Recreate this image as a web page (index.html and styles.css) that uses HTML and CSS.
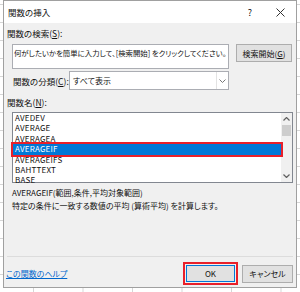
FILE: index.html
```html
<!DOCTYPE html>
<html lang="ja">
<head>
    <meta charset="UTF-8">
    <meta name="viewport" content="width=device-width, initial-scale=1.0"/>
    <title>関数の挿入</title>
    <link rel="stylesheet" href="styles.css">
</head>
<body>
<div class="dialog">
    <div class="titlebar">
        <span class="title">関数の挿入</span>
        <span class="help">?</span>
        <span class="close">
            <svg width="9" height="9" viewBox="0 0 9 9"><path d="M0.5 0.5 L8.5 8.5 M8.5 0.5 L0.5 8.5" stroke="#333" stroke-width="1" fill="none"/></svg>
        </span>
    </div>

    <div class="content">
        <div class="label first">関数の検索(<u>S</u>):</div>
        <div class="search-row">
            <div class="search-box">何がしたいかを簡単に入力して、[検索開始] をクリックしてください。</div>
            <div class="btn search-btn">検索開始(<u>G</u>)</div>
        </div>

        <div class="category-row">
            <span class="cat-label">関数の分類(<u>C</u>):</span>
            <div class="select">
                <span class="select-text">すべて表示</span>
                <span class="select-arrow">
                    <svg width="7" height="4" viewBox="0 0 7 4"><path d="M0.5 0.5 L3.5 3.5 L6.5 0.5" stroke="#777" fill="none"/></svg>
                </span>
            </div>
        </div>

        <div class="label names">関数名(<u>N</u>):</div>
        <div class="listbox">
            <ul class="items">
                <li>AVEDEV</li>
                <li>AVERAGE</li>
                <li>AVERAGEA</li>
                <li class="selected">AVERAGEIF</li>
                <li>AVERAGEIFS</li>
                <li>BAHTTEXT</li>
                <li>BASE</li>
            </ul>
            <div class="scrollbar">
                <span class="arrow">
                    <svg width="7" height="4" viewBox="0 0 7 4"><path d="M0.5 3.5 L3.5 0.5 L6.5 3.5" stroke="#606060" stroke-width="1.2" fill="none"/></svg>
                </span>
                <span class="thumb"></span>
                <span class="arrow down">
                    <svg width="7" height="4" viewBox="0 0 7 4"><path d="M0.5 0.5 L3.5 3.5 L6.5 0.5" stroke="#606060" stroke-width="1.2" fill="none"/></svg>
                </span>
            </div>
        </div>

        <div class="desc">
            <div>AVERAGEIF(範囲,条件,平均対象範囲)</div>
            <div>特定の条件に一致する数値の平均 (算術平均) を計算します。</div>
        </div>

        <div class="footer">
            <a class="help-link" href="#">この関数のヘルプ</a>
            <div class="btn ok">OK</div>
            <div class="btn cancel">キャンセル</div>
        </div>
    </div>
</div>
</body>
</html>
```

FILE: styles.css
```css
body {
    margin: 0;
    width: 300px;
    height: 292px;
    overflow: hidden;
    font-family: "Noto Sans CJK JP", "Noto Sans", sans-serif;
    font-size: 8px;
    font-feature-settings: "palt";
    color: #111;
    background-color: #fff;
    background-image:
        linear-gradient(to right, #d6d6d6 1px, transparent 1px),
        linear-gradient(#d6d6d6 1px, transparent 1px);
    background-size: 49.5px 100%, 100% 18px;
    background-position: 33px 0, 0 4px;
}

u {
    text-decoration: underline;
    text-underline-offset: 1px;
}

.dialog {
    margin-left: 3px;
    width: 294px;
    height: 288px;
    box-sizing: border-box;
    border: 1px solid #a0a0a0;
    background: #f0f0f0;
    display: flex;
    flex-direction: column;
    white-space: nowrap;
}

.titlebar {
    height: 22px;
    flex: none;
    background: #fff;
    display: flex;
    align-items: center;
    padding-left: 4px;
}

.title {
    flex: 1;
    font-size: 8.5px;
}

.help {
    font-size: 9px;
    width: 30px;
    text-align: center;
    margin-top: 1px;
}

.close {
    width: 30px;
    display: flex;
    justify-content: center;
    margin-right: 1px;
}

.content {
    flex: 1;
    display: flex;
    flex-direction: column;
    padding: 0 3px;
}

.label {
    line-height: 12px;
    font-size: 8.5px;
}

.label.first {
    margin-top: 4px;
}

.search-row {
    display: flex;
    align-items: flex-start;
    margin: 5px 0 0 5px;
}

.search-box {
    width: 217px;
    height: 25px;
    box-sizing: border-box;
    border: 1px solid #abadb3;
    background: #fff;
    padding: 2px 1px;
    font-size: 7.4px;
    line-height: 12px;
    overflow: hidden;
}

.btn {
    box-sizing: border-box;
    background: #e1e1e1;
    border: 1px solid #adadad;
    display: flex;
    align-items: center;
    justify-content: center;
}

.search-btn {
    margin-left: 7px;
    width: 56px;
    height: 18px;
}

.category-row {
    display: flex;
    align-items: center;
    margin: 2px 0 0 6px;
}

.cat-label {
    width: 56px;
    flex: none;
    font-size: 8.5px;
}

.select {
    width: 160px;
    height: 19px;
    box-sizing: border-box;
    border: 1px solid #abadb3;
    background: #fff;
    display: flex;
    align-items: stretch;
}

.select-text {
    flex: 1;
    padding-left: 3px;
    line-height: 17px;
}

.select-arrow {
    width: 11px;
    border-left: 1px solid #e3e3e3;
    display: flex;
    align-items: center;
    justify-content: center;
}

.label.names {
    margin-top: 6px;
}

.listbox {
    margin: 4px 0 0 5px;
    width: 281px;
    height: 71px;
    box-sizing: border-box;
    border: 1px solid #828790;
    background: #fff;
    display: flex;
}

.items {
    list-style: none;
    margin: 0;
    padding: 0;
    flex: 1;
    letter-spacing: 0.2px;
}

.items li {
    height: 10.4px;
    line-height: 10.4px;
    padding-left: 2px;
}

.items li.selected {
    background: #0078d7;
    color: #fff;
    outline: 2px solid #e8202a;
    outline-offset: 0;
    position: relative;
}

.scrollbar {
    width: 11px;
    background: #f0f0f0;
    display: flex;
    flex-direction: column;
    align-items: center;
}

.arrow {
    height: 11px;
    display: flex;
    align-items: center;
}

.thumb {
    margin-top: 1px;
    width: 9px;
    height: 11px;
    background: #cdcdcd;
}

.arrow.down {
    margin-top: auto;
    height: 13px;
}

.desc {
    margin: 4px 0 0 5px;
    line-height: 12.5px;
}

.footer {
    margin-top: auto;
    border-top: 1px solid #dcdcdc;
    height: 31px;
    box-sizing: border-box;
    padding-top: 3px;
    display: flex;
    align-items: center;
}

.help-link {
    margin-left: -1px;
    color: #0066cc;
    text-decoration: underline;
    flex: 1;
}

.ok {
    width: 49px;
    height: 17px;
    border-color: #0078d7;
    outline: 2px solid #e8202a;
    outline-offset: 1px;
}

.cancel {
    margin-left: 7px;
    width: 51px;
    height: 18px;
}
```
